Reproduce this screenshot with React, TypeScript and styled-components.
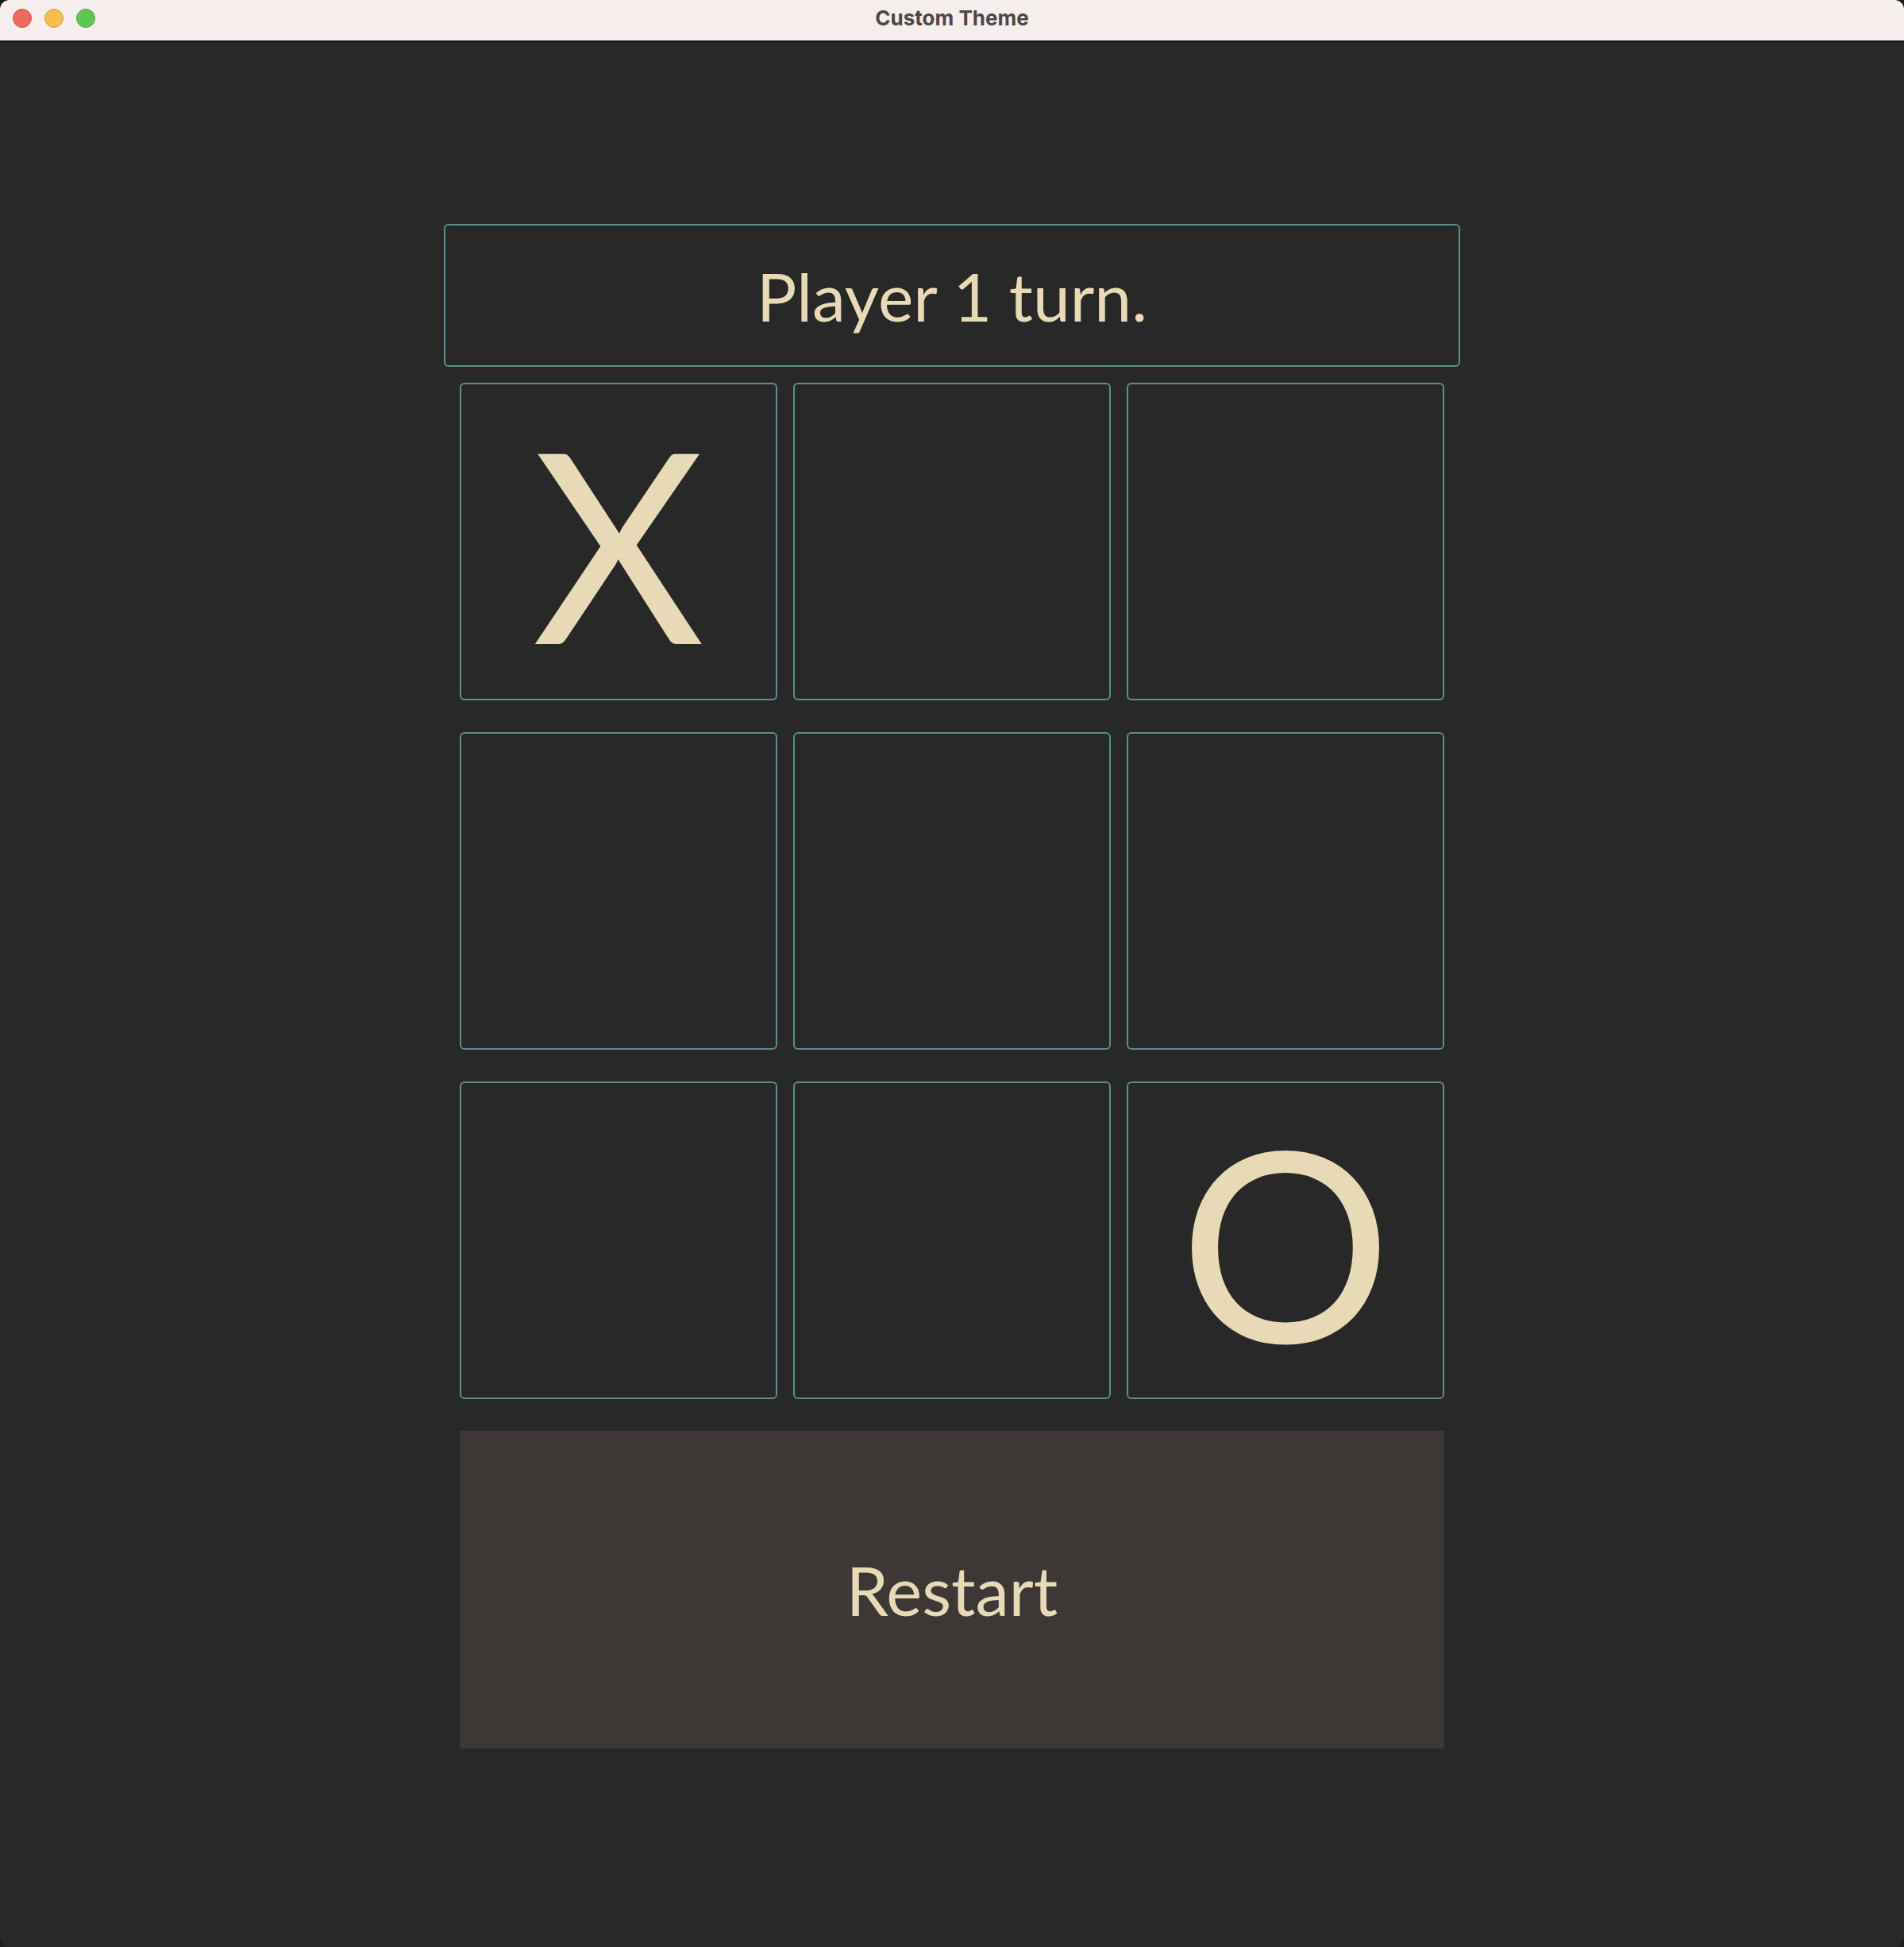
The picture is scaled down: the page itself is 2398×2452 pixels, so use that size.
import React, { useState } from 'react';
import styled, { createGlobalStyle } from 'styled-components';

const GlobalStyle = createGlobalStyle`
  html, body {
    margin: 0;
    padding: 0;
    background: #1b1b1b;
  }
  * {
    box-sizing: border-box;
  }
`;

const Window = styled.div`
  width: 2398px;
  height: 2452px;
  display: flex;
  flex-direction: column;
  background: #282828;
  border-radius: 12px;
  overflow: hidden;
`;

const TitleBar = styled.div`
  position: relative;
  height: 53px;
  flex-shrink: 0;
  display: flex;
  align-items: center;
  justify-content: center;
  padding-bottom: 6px;
  background: #f6eeec;
  border-bottom: 2px solid #111;
  font-family: Inter, "Liberation Sans", sans-serif;
  font-weight: 700;
  font-size: 26px;
  color: #4a4747;
`;

const Lights = styled.div`
  position: absolute;
  left: 16px;
  top: 11px;
  display: flex;
  gap: 16px;
`;

const Light = styled.span<{ $fill: string; $edge: string }>`
  width: 24px;
  height: 24px;
  border-radius: 50%;
  background: ${(p) => p.$fill};
  border: 1px solid ${(p) => p.$edge};
`;

const Content = styled.div`
  flex: 1;
  display: flex;
  flex-direction: column;
  align-items: center;
  padding-top: 229px;
  font-family: Lato, "Open Sans", sans-serif;
  color: #e8dab7;
`;

const Game = styled.div`
  width: 1280px;
  display: flex;
  flex-direction: column;
  align-items: center;
`;

const Status = styled.div`
  width: 1280px;
  height: 180px;
  display: flex;
  align-items: center;
  justify-content: center;
  border: 2px solid #5a8d90;
  border-radius: 6px;
  font-size: 84px;
`;

const Board = styled.div`
  margin-top: 20px;
  display: grid;
  grid-template-columns: repeat(3, 400px);
  grid-auto-rows: 400px;
  column-gap: 20px;
  row-gap: 40px;
`;

const Cell = styled.button`
  display: flex;
  align-items: center;
  justify-content: center;
  padding: 0;
  background: transparent;
  border: 2px solid #5a8d90;
  border-radius: 6px;
  font-family: inherit;
  color: inherit;
  font-size: 334px;
  line-height: 1;
  cursor: pointer;
`;

const RestartButton = styled.button`
  margin-top: 40px;
  width: 1240px;
  height: 400px;
  border: none;
  background: #3d3835;
  font-family: inherit;
  color: inherit;
  font-size: 85px;
  cursor: pointer;
`;

const initial = ['X', '', '', '', '', '', '', '', 'O'];

export default function App() {
  const [cells, setCells] = useState<string[]>(initial);

  return (
    <>
      <GlobalStyle />
      <Window>
        <TitleBar>
          <Lights>
            <Light $fill="#ee6a5f" $edge="#d25248" />
            <Light $fill="#f5bf4f" $edge="#d6a03a" />
            <Light $fill="#61c554" $edge="#4ea843" />
          </Lights>
          Custom Theme
        </TitleBar>
        <Content>
          <Game>
            <Status>Player 1 turn.</Status>
            <Board>
              {cells.map((c, i) => (
                <Cell key={i} onClick={() => {}}>
                  {c}
                </Cell>
              ))}
            </Board>
            <RestartButton onClick={() => setCells(initial)}>Restart</RestartButton>
          </Game>
        </Content>
      </Window>
    </>
  );
}
